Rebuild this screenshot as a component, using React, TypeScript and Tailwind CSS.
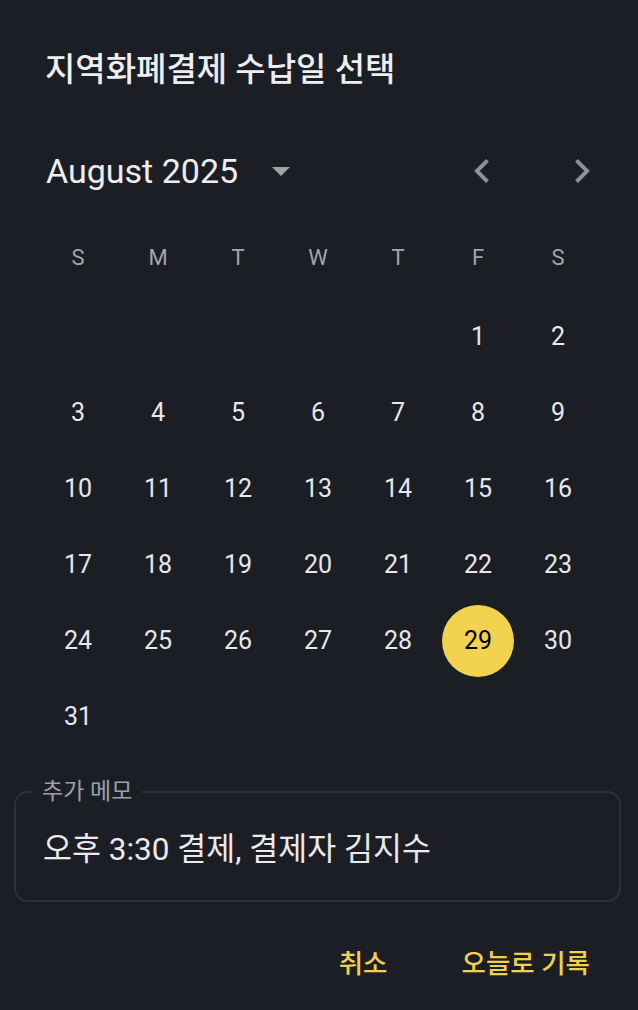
import { useState } from 'react';

const WEEKDAYS = ['S', 'M', 'T', 'W', 'T', 'F', 'S'];

// August 2025 starts on a Friday
const LEADING_BLANKS = 5;
const DAYS_IN_MONTH = 31;

function ChevronLeft() {
  return (
    <svg width="15" height="24" viewBox="8 6 7.41 12" fill="#8f9198">
      <path d="M15.41 7.41L14 6l-6 6 6 6 1.41-1.41L10.83 12z" />
    </svg>
  );
}

function ChevronRight() {
  return (
    <svg width="15" height="24" viewBox="8.59 6 7.41 12" fill="#8f9198">
      <path d="M10 6L8.59 7.41 13.17 12l-4.58 4.59L10 18l6-6z" />
    </svg>
  );
}

function DropTriangle() {
  return (
    <svg width="18" height="9" viewBox="0 0 18 9" fill="#a2a3a7">
      <path d="M0 0h18L9 9z" />
    </svg>
  );
}

export default function App() {
  const [selected, setSelected] = useState(29);
  const [memo, setMemo] = useState('오후 3:30 결제, 결제자 김지수');

  const cells: (number | null)[] = [
    ...Array.from({ length: LEADING_BLANKS }, () => null),
    ...Array.from({ length: DAYS_IN_MONTH }, (_, i) => i + 1),
  ];

  return (
    <div className="w-[638px] h-[1010px] bg-[#1c1e26] font-['Roboto','Noto_Sans_CJK_KR',sans-serif] overflow-hidden">
      {/* Title */}
      <h1 className="pt-[50px] pl-[45px] h-[90px] text-[33px] leading-[40px] font-medium text-[#eeeef1]">
        지역화폐결제 수납일 선택
      </h1>

      {/* Month header */}
      <div className="mt-[56px] h-[50px] flex items-center pl-[46px] pr-[48px]">
        <span className="text-[34px] leading-[50px] text-[#eeeef1]">August 2025</span>
        <button className="ml-[34px] flex items-center">
          <DropTriangle />
        </button>
        <button className="ml-auto flex items-center">
          <ChevronLeft />
        </button>
        <button className="ml-[86px] flex items-center">
          <ChevronRight />
        </button>
      </div>

      {/* Weekdays */}
      <div className="mt-[39px] ml-[38px] w-[560px] grid grid-cols-7 h-[44px]">
        {WEEKDAYS.map((d, i) => (
          <div key={i} className="flex items-center justify-center text-[22px] text-[#a0a4b0]">
            {d}
          </div>
        ))}
      </div>

      {/* Days */}
      <div className="mt-[20px] ml-[38px] w-[560px] grid grid-cols-7 auto-rows-[76px]">
        {cells.map((day, i) =>
          day === null ? (
            <div key={i} />
          ) : (
            <div key={i} className="flex items-center justify-center">
              <button
                onClick={() => setSelected(day)}
                className={`w-[72px] h-[72px] rounded-full flex items-center justify-center text-[25px] ${
                  day === selected ? 'bg-[#f2d24f] text-black' : 'text-[#e7e8eb]'
                }`}
              >
                {day}
              </button>
            </div>
          )
        )}
      </div>

      {/* Memo field */}
      <fieldset className="mt-[23px] ml-[14px] w-[607px] h-[124px] border-2 border-[#2e313b] rounded-[14px] px-[12px]">
        <legend className="ml-[4px] px-[10px] text-[23px] leading-[28px] text-[#9ca0ab]">추가 메모</legend>
        <input
          value={memo}
          onChange={(e) => setMemo(e.target.value)}
          className="mt-[23px] ml-[15px] w-[560px] bg-transparent outline-none text-[31.5px] leading-[42px] text-[#eaeaed]"
        />
      </fieldset>

      {/* Actions */}
      <div className="mt-[44px] flex justify-end items-center gap-[74px] pr-[48px]">
        <button className="text-[26.5px] leading-[36px] font-medium text-[#f1d04c]">취소</button>
        <button className="text-[26.5px] leading-[36px] font-medium text-[#f1d04c]">오늘로 기록</button>
      </div>
    </div>
  );
}
